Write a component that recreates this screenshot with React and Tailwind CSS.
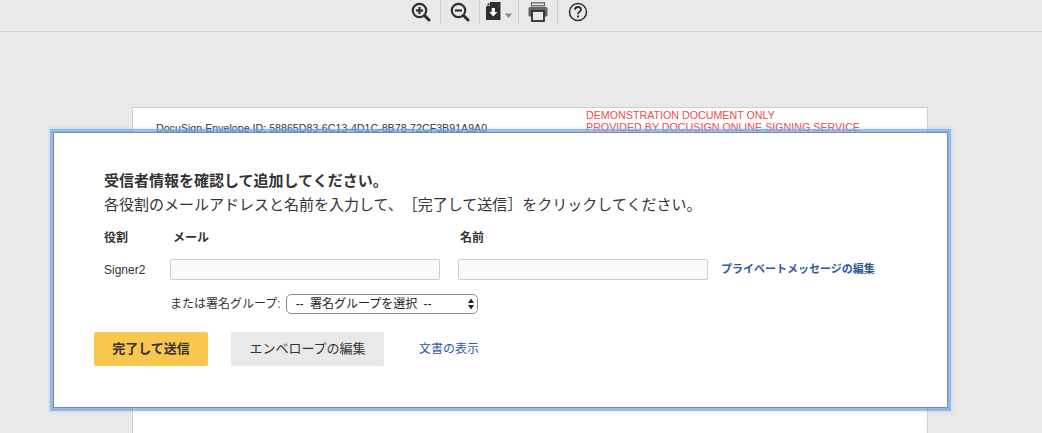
import React from "react";

const jp = "font-['Liberation_Sans','Noto_Sans_CJK_JP',sans-serif]";

const ZoomIcon = ({ plus }) => (
  <svg width="20" height="20" viewBox="0 0 20 20" fill="none" stroke="#2f2f2f">
    <circle cx="8.5" cy="8.5" r="6.7" strokeWidth="2.2" />
    <path d="M13.5 13.5L18 18" strokeWidth="3" strokeLinecap="round" />
    <path d="M5 8.5h7" strokeWidth="2.2" />
    {plus && <path d="M8.5 5v7" strokeWidth="2.2" />}
  </svg>
);

const DownloadIcon = () => (
  <svg width="26" height="20" viewBox="0 0 26 20">
    <path d="M4 0h10.5v18H0V4.500L1 4h3z" fill="#2f2f2f" />
    <path d="M3.500 0.500v2.800H0.700z" fill="#2f2f2f" />
    <path d="M5.700 6h3.200v4h2.500L7.300 14.500 3.200 10h2.500z" fill="#fff" />
    <path d="M19 11.500h7l-3.500 4.500z" fill="#8a8a8a" />
  </svg>
);

const PrintIcon = () => (
  <svg width="20" height="20" viewBox="0 0 20 20">
    <rect x="3.500" y="0.800" width="13" height="3" fill="none" stroke="#666" strokeWidth="1.300" />
    <rect x="0.500" y="5" width="19" height="9.500" rx="1.500" fill="#666" />
    <rect x="4" y="9" width="12" height="10" fill="#e9e9e9" stroke="#2f2f2f" strokeWidth="1.800" />
  </svg>
);

const HelpIcon = () => (
  <svg width="20" height="20" viewBox="0 0 20 20" fill="none" stroke="#2f2f2f">
    <circle cx="10" cy="10" r="8.500" strokeWidth="1.500" />
    <path d="M7 7.700C7 5.900 8.300 5 10 5s3 1 3 2.600c0 2.200-3 2.300-3 4.600" strokeWidth="1.800" />
    <rect x="9" y="13.500" width="2" height="2" fill="#2f2f2f" stroke="none" />
  </svg>
);

const ToolButton = ({ children, last }) => (
  <div className={`w-[39px] h-[24px] flex items-center justify-center ${last ? "" : "border-r border-[#d2d2d2]"}`}>
    {children}
  </div>
);

const App = () => {
  return (
    <div className={`relative w-[1042px] h-[433px] overflow-hidden bg-[#e9e9e9] [text-spacing-trim:space-all] ${jp}`}>
      <div className="h-[32px] border-b border-[#d4d4d4] flex items-start pl-[402px]">
        <ToolButton><ZoomIcon plus /></ToolButton>
        <ToolButton><ZoomIcon /></ToolButton>
        <ToolButton><DownloadIcon /></ToolButton>
        <ToolButton><PrintIcon /></ToolButton>
        <ToolButton last><HelpIcon /></ToolButton>
      </div>

      <div className="relative mt-[75px] ml-[132px] w-[796px] h-[400px] bg-white border border-[#cfcfcf]">
        <div className="absolute left-[23px] top-[14px] text-[10.67px] leading-[12px] text-[#333] whitespace-nowrap">
          DocuSign Envelope ID: 58865D83-6C13-4D1C-8B78-72CF3B91A9A0
        </div>
        <div className="absolute left-[453px] top-[1px] text-[10.7px] leading-[12px] text-[#f04b4b] whitespace-nowrap">
          <div>DEMONSTRATION DOCUMENT ONLY</div>
          <div>PROVIDED BY DOCUSIGN ONLINE SIGNING SERVICE</div>
        </div>
      </div>

      <div className="absolute left-[53px] top-[132px] w-[895px] h-[276px] bg-white border border-[#7f8a99] shadow-[0_0_0_3px_rgba(100,160,240,0.6),0_0_3px_4px_rgba(150,190,240,0.3)] pt-[37px] pl-[50px]">
        <div className="text-[15px] leading-[22px] font-bold text-[#333]">受信者情報を確認して追加してください。</div>
        <div className="mt-[2px] text-[15px] leading-[22px] text-[#333] whitespace-nowrap">
          各役割のメールアドレスと名前を入力して、［完了して送信］をクリックしてください。
        </div>

        <div className="flex mt-[14px] text-[12px] leading-[16px] font-bold text-[#333]">
          <div className="w-[69px]">役割</div>
          <div className="w-[287px]">メール</div>
          <div>名前</div>
        </div>

        <div className="flex items-center mt-[13px]">
          <div className="w-[66px] text-[12px] text-[#333]">Signer2</div>
          <input className="w-[270px] h-[21px] bg-[#fafafa] border border-[#cccccc] rounded-[2px]" />
          <input className="ml-[18px] w-[250px] h-[21px] bg-[#fafafa] border border-[#cccccc] rounded-[2px]" />
          <a className="ml-[13px] text-[11px] font-bold text-[#2c5aa0] whitespace-nowrap">プライベートメッセージの編集</a>
        </div>

        <div className="flex items-center mt-[14px] ml-[66px]">
          <span className="text-[12px] text-[#333] whitespace-nowrap">または署名グループ:</span>
          <div className="relative ml-[5px] w-[192px] h-[20px]">
            <select className="block appearance-none w-full h-full pl-[9px] text-[12px] [word-spacing:3px] text-[#222] bg-white border border-[#8f8f8f] rounded-[5px]">
              <option>-- 署名グループを選択 --</option>
            </select>
            <svg className="absolute right-[4px] top-[4px]" width="6" height="12" viewBox="0 0 6 12" fill="#222">
              <path d="M3 0.500L6 5H0z" />
              <path d="M0 7h6l-3 4.500z" />
            </svg>
          </div>
        </div>

        <div className="flex items-center mt-[18px] -ml-[10px]">
          <button className="w-[114px] h-[34px] bg-[#f9c74f] rounded-[2px] text-[13px] font-bold text-[#333]">完了して送信</button>
          <button className="ml-[23px] w-[153px] h-[34px] bg-[#e9e9e9] rounded-[2px] text-[13px] text-[#333]">エンベロープの編集</button>
          <a className="ml-[35px] text-[12px] text-[#2c5aa0] whitespace-nowrap">文書の表示</a>
        </div>
      </div>
    </div>
  );
};

export default App;
